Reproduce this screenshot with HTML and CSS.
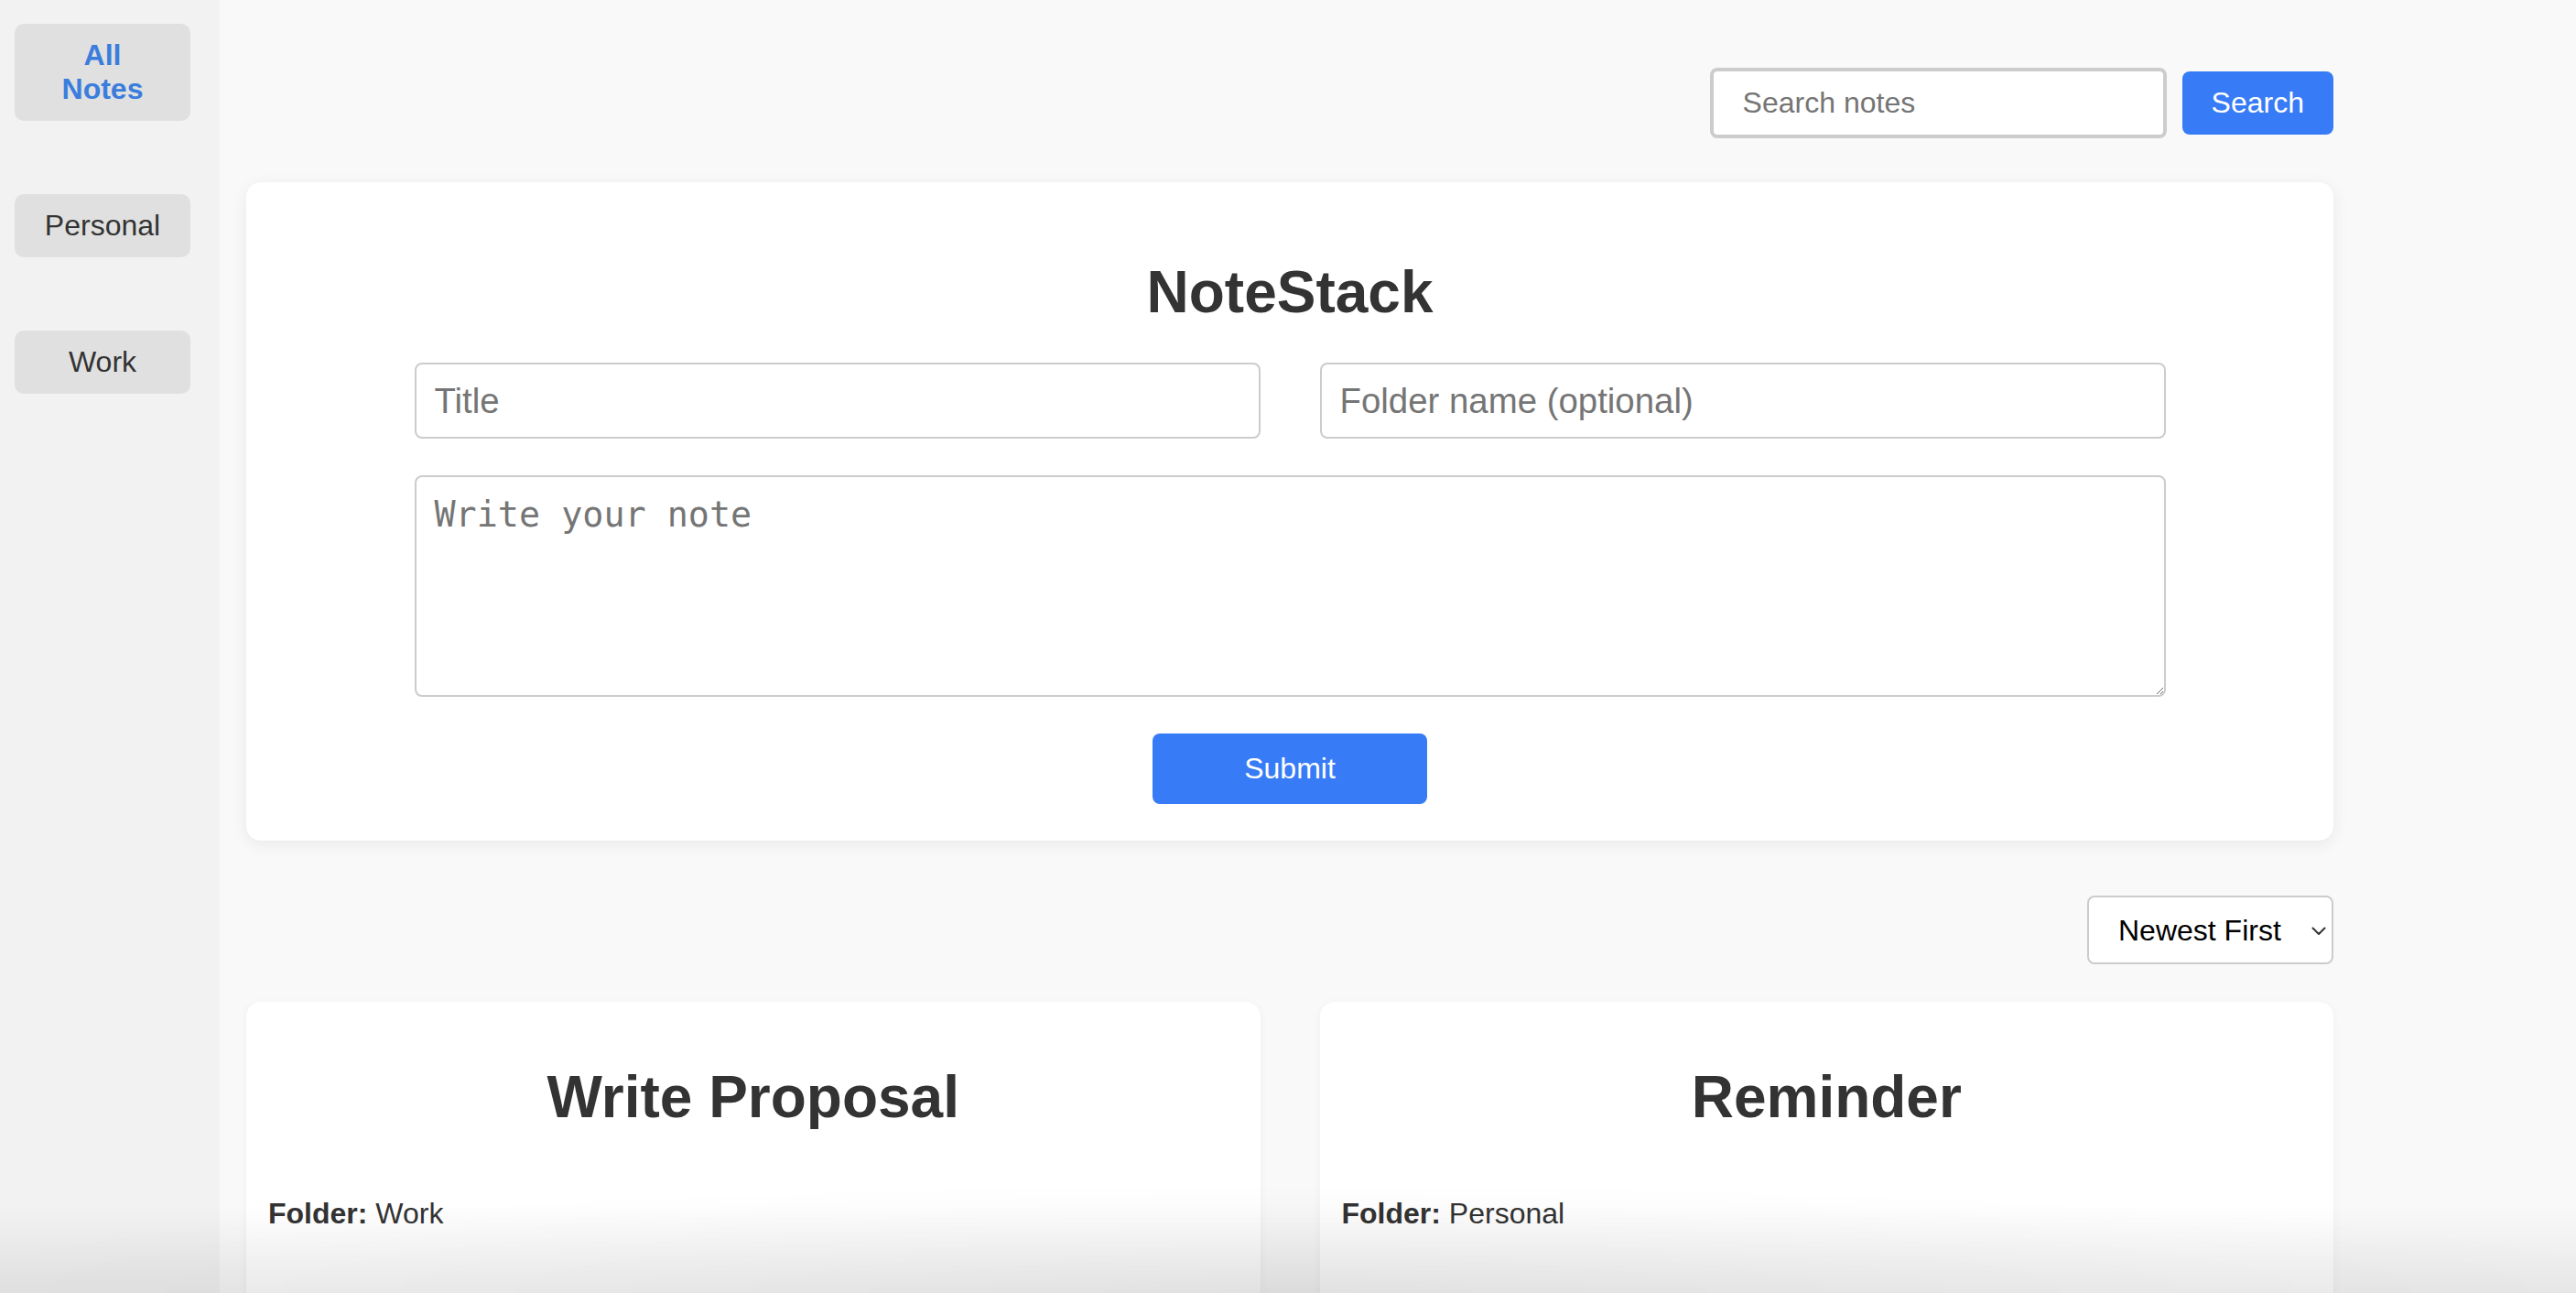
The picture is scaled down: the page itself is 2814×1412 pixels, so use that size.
FILE: index.html
```html
<!DOCTYPE html>
<html lang="en">
<head>
<meta charset="utf-8">
<title>NoteStack</title>
<link rel="stylesheet" href="styles.css">
</head>
<body>
<div class="app">
  <aside class="sidebar">
    <button class="folder active">All Notes</button>
    <button class="folder">Personal</button>
    <button class="folder">Work</button>
  </aside>
  <main class="main">
    <div class="content">
      <header class="searchbar">
        <input class="search-input" type="text" placeholder="Search notes">
        <button class="btn search-btn">Search</button>
      </header>
      <section class="composer">
        <h1 class="brand">NoteStack</h1>
        <form class="note-form">
          <div class="row">
            <input class="field" type="text" placeholder="Title">
            <input class="field" type="text" placeholder="Folder name (optional)">
          </div>
          <textarea class="field area" placeholder="Write your note"></textarea>
          <button class="btn submit" type="button">Submit</button>
        </form>
      </section>
      <div class="sortbar">
        <div class="select-wrap">
          <select class="sort">
            <option>Newest First</option>
            <option>Oldest First</option>
          </select>
          <svg class="chev" width="16" height="10" viewBox="0 0 16 10"><path d="M1.5 1.5 L8 8 L14.5 1.5" fill="none" stroke="#333" stroke-width="2" stroke-linecap="round" stroke-linejoin="round"/></svg>
        </div>
      </div>
      <div class="notes">
        <article class="note">
          <h2 class="note-title">Write Proposal</h2>
          <p class="note-folder"><strong>Folder:</strong> Work</p>
        </article>
        <article class="note">
          <h2 class="note-title">Reminder</h2>
          <p class="note-folder"><strong>Folder:</strong> Personal</p>
        </article>
      </div>
    </div>
  </main>
  <div class="fade"></div>
</div>
</body>
</html>
```
FILE: styles.css
```css
html, body {
  margin: 0;
  padding: 0;
}
body {
  font-family: "Liberation Sans", Arial, Helvetica, sans-serif;
  background: #f9f9f9;
  color: #333;
}
.app {
  display: flex;
  min-height: 100vh;
}
.sidebar {
  width: 240px;
  flex-shrink: 0;
  background: #f2f2f2;
  min-height: 100vh;
  box-sizing: border-box;
  padding: 26px 0 0 16px;
  display: flex;
  flex-direction: column;
  align-items: flex-start;
  gap: 80px;
}
.folder {
  width: 192px;
  box-sizing: border-box;
  padding: 16px 32px;
  border: none;
  border-radius: 10px;
  background: #e0e0e0;
  font-family: "Liberation Sans", Arial, sans-serif;
  font-size: 32px;
  line-height: normal;
  color: #333;
  text-align: center;
  cursor: pointer;
}
.folder.active {
  color: #3b7ddd;
  font-weight: bold;
}
.main {
  flex: 1;
  padding: 74px 0 80px 29px;
}
.content {
  width: 2280px;
}
.searchbar {
  display: flex;
  justify-content: flex-end;
  align-items: center;
  gap: 17px;
  margin-bottom: 48px;
}
.search-input {
  width: 499px;
  height: 77px;
  box-sizing: border-box;
  border: 4px solid #ccc;
  border-radius: 8px;
  padding: 0 32px;
  font-family: "Liberation Sans", Arial, sans-serif;
  font-size: 32px;
  color: #333;
  background: #fff;
  outline: none;
}
.btn {
  border: none;
  background: #377bf6;
  color: #fff;
  font-family: "Liberation Sans", Arial, sans-serif;
  font-size: 32px;
  line-height: normal;
  border-radius: 8px;
  cursor: pointer;
}
.search-btn {
  padding: 16px 32px;
}
.composer {
  background: #fff;
  border-radius: 16px;
  padding: 40px;
  box-shadow: 0 4px 18px rgba(0, 0, 0, 0.07);
}
.brand {
  font-size: 64px;
  font-weight: bold;
  line-height: normal;
  text-align: center;
  margin: 43px 0 40px;
  color: #333;
}
.note-form {
  width: 1913px;
  margin: 0 auto;
  display: flex;
  flex-direction: column;
  align-items: center;
  gap: 40px;
}
.row {
  display: grid;
  grid-template-columns: 1fr 1fr;
  gap: 65px;
  width: 100%;
}
.field {
  box-sizing: border-box;
  width: 100%;
  height: 83px;
  border: 2px solid #ccc;
  border-radius: 8px;
  padding: 0 20px;
  font-family: "Liberation Sans", Arial, sans-serif;
  font-size: 38.4px;
  color: #333;
  background: #fff;
  outline: none;
}
.area {
  height: 242px;
  padding: 18px 20px;
  font-family: "DejaVu Sans Mono", "Liberation Mono", monospace;
  display: block;
}
.submit {
  width: 300px;
  height: 77px;
}
.sortbar {
  display: flex;
  justify-content: flex-end;
  margin: 60px 0 41px;
}
.select-wrap {
  position: relative;
}
.sort {
  -webkit-appearance: none;
  appearance: none;
  width: 269px;
  height: 75px;
  box-sizing: border-box;
  border: 2px solid #ccc;
  border-radius: 8px;
  background: #fff;
  padding: 0 0 0 32px;
  font-family: "Liberation Sans", Arial, sans-serif;
  font-size: 32px;
  color: #000;
  outline: none;
}
.chev {
  position: absolute;
  right: 8px;
  top: 34px;
  pointer-events: none;
}
.notes {
  display: grid;
  grid-template-columns: 1fr 1fr;
  gap: 65px;
}
.note {
  background: #fff;
  border-radius: 16px;
  padding: 24px;
  min-height: 520px;
  box-shadow: 0 2px 10px rgba(0, 0, 0, 0.05);
}
.note-title {
  font-size: 64px;
  font-weight: bold;
  line-height: normal;
  text-align: center;
  margin: 43px 0 72px;
  color: #333;
}
.note-folder {
  font-size: 32px;
  margin: 0;
  color: #333;
}
.fade {
  position: fixed;
  left: 0;
  right: 0;
  bottom: 0;
  height: 120px;
  background:
    radial-gradient(ellipse 55% 100% at 50% 100%, rgba(0, 0, 0, 0.05), rgba(0, 0, 0, 0) 100%),
    linear-gradient(to bottom, rgba(0, 0, 0, 0) 20%, rgba(0, 0, 0, 0.07));
  pointer-events: none;
}
```
